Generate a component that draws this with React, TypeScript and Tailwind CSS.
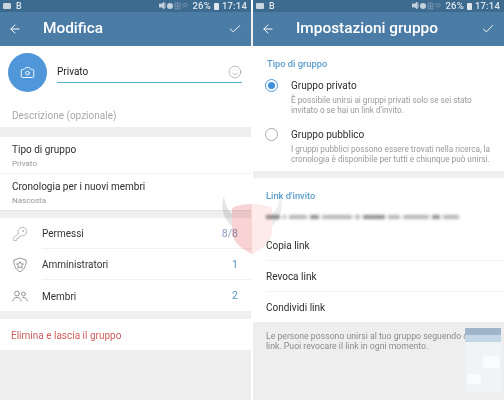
import { ArrowLeft, Camera, Check, KeyRound, Smile } from "lucide-react";

const StatusBar = () => (
    <div className="h-[12px] bg-[#3d6a8f] flex items-center justify-between pl-[3px] pr-[4px] text-[#dfe8ef]">
        <div className="flex items-center gap-[5px]">
            <div className="w-[8px] h-[6px] bg-[#c9d6e0] rounded-[1px]" />
            <span className="text-[9px] font-medium leading-none">B</span>
        </div>
        <div className="flex items-center gap-[2px]">
            <svg width="30" height="8" viewBox="0 0 30 8" className="text-[#c3d1dc]">
                <path d="M0 2h3l2-2v7L3 5H0z M6 1v5" fill="currentColor" stroke="currentColor" strokeWidth="0.8" />
                <circle cx="11" cy="4" r="3" fill="currentColor" />
                <path d="M16 1h5v6h-5z M16 4h5 M18.5 1v6" fill="none" stroke="currentColor" strokeWidth="0.6" opacity="0.6" />
                <path d="M23 3q3-3 6 0M24 5q2-2 4 0" fill="none" stroke="currentColor" strokeWidth="0.7" opacity="0.6" />
            </svg>
            <span className="text-[9.5px] font-medium leading-none tracking-[0.2px] ml-[1px]">26%</span>
            <div className="w-[5px] h-[7px] bg-[#dfe8ef] rounded-[1px] mx-[1px]" />
            <span className="text-[9.5px] font-medium leading-none tracking-[0.2px]">17:14</span>
        </div>
    </div>
);

const Header = ({ title, titleClass }: { title: string; titleClass: string }) => (
    <div className="h-[34px] bg-[#4a7ca6] flex items-center text-white shadow-[0_1px_2px_rgba(0,0,0,0.15)]">
        <ArrowLeft size={14} strokeWidth={1.7} className="ml-[8px] shrink-0" />
        <span className={`text-[15.4px] font-medium ${titleClass}`}>{title}</span>
        <Check size={14} strokeWidth={1.6} className="ml-auto mr-[9px]" />
    </div>
);

const ShieldStar = () => (
    <svg width="16" height="16" viewBox="0 0 16 16" fill="none" stroke="#8a8a8a" strokeWidth="0.9" strokeLinejoin="round">
        <path d="M8 1l6.2 2.200c0 5-1.600 9.200-6.200 11.600C3.400 12.400 1.800 8.200 1.800 3.200z" />
        <path d="M8 4.600l1.100 2.200 2.400.3-1.800 1.600.5 2.400L8 10l-2.200 1.100.5-2.400-1.800-1.600 2.400-.3z" />
    </svg>
);

const People = () => (
    <svg width="16" height="16" viewBox="0 0 16 16" fill="none" stroke="#8a8a8a" strokeWidth="0.9" strokeLinecap="round">
        <circle cx="5" cy="5.500" r="2.400" />
        <circle cx="11.500" cy="6" r="2" />
        <path d="M0.800 13c0-2.400 1.800-3.600 4.200-3.600S9.200 10.600 9.200 13" />
        <path d="M10.600 9.500c2.400-.3 4.600.9 4.600 3.500" />
    </svg>
);

const CountRow = ({ label, count, icon, countClass, divider }: { label: string; count: string; icon: React.ReactNode; countClass: string; divider?: boolean }) => (
    <div className="h-[31px] flex items-center">
        <div className="w-[42px] pl-[12px] flex items-center text-[#8a8a8a]">{icon}</div>
        <div className={`flex-1 h-full flex items-center justify-between pt-[1px] pr-[13px] ${divider ? "border-b border-[#f1f1f1]" : ""}`}>
            <span className="text-[10px] text-[#333333]">{label}</span>
            <span className={`text-[10.500px] ${countClass}`}>{count}</span>
        </div>
    </div>
);

const LeftPanel = () => (
    <div className="w-[251px] h-full flex flex-col bg-[#eeeeee]">
        <StatusBar />
        <Header title="Modifica" titleClass="ml-[21px]" />
        <div className="h-[81px] bg-white pl-[8px] pr-[9px]">
            <div className="flex items-start pt-[7px]">
                <div className="w-[39px] h-[39px] rounded-full bg-[#4f97d8] flex items-center justify-center text-white shrink-0">
                    <Camera size={15} strokeWidth={1.5} />
                </div>
                <div className="ml-[10px] flex-1 h-[22px] mt-[8px] flex items-center justify-between border-b border-[#58b1cf]">
                    <span className="text-[10px] text-[#222222]">Privato</span>
                    <Smile size={14} strokeWidth={1} className="text-[#8f8f8f]" />
                </div>
            </div>
            <p className="mt-[17px] ml-[4px] text-[10px] leading-[14px] text-[#a9a9a9]">Descrizione (opzionale)</p>
        </div>
        <div className="h-[10px] bg-[#efefef]" />
        <div className="h-[74px] bg-white border-b border-[#e4e4e4]">
            <div className="h-[37px] px-[12px] pt-[6px] border-b border-[#f3f3f3]">
                <p className="text-[10px] leading-[14px] text-[#2e2e2e]">Tipo di gruppo</p>
                <p className="text-[8px] leading-[13px] text-[#999999]">Privato</p>
            </div>
            <div className="h-[36px] px-[12px] pt-[6px]">
                <p className="text-[10px] leading-[14px] text-[#2e2e2e]">Cronologia per i nuovi membri</p>
                <p className="text-[8px] leading-[13px] text-[#999999]">Nascosta</p>
            </div>
        </div>
        <div className="h-[7px] bg-[#efefef]" />
        <div className="bg-white">
            <CountRow label="Permessi" count="8/8" countClass="text-[#8a9cc4]" icon={<KeyRound size={16} strokeWidth={0.9} />} divider />
            <CountRow label="Amministratori" count="1" countClass="text-[#4f93c4]" icon={<ShieldStar />} divider />
            <CountRow label="Membri" count="2" countClass="text-[#4f93c4]" icon={<People />} />
        </div>
        <div className="h-[8px] bg-[#efefef]" />
        <div className="h-[31px] bg-white flex items-center pt-[1px] px-[11px]">
            <span className="text-[10px] text-[#cf5f5f]">Elimina e lascia il gruppo</span>
        </div>
    </div>
);

const RadioOption = ({ title, lines, selected }: { title: string; lines: string[]; selected?: boolean }) => (
    <div className="flex">
        <div className="w-[38px] pl-[12px] pt-[2px] shrink-0">
            <div className={`w-[13px] h-[13px] rounded-full border flex items-center justify-center ${selected ? "border-[#4f97d8]" : "border-[#aaaaaa]"}`}>
                {selected && <div className="w-[7px] h-[7px] rounded-full bg-[#3f93dc]" />}
            </div>
        </div>
        <div>
            <p className="text-[10px] leading-[16px] pt-[1px] mb-[1px] text-[#2e2e2e]">{title}</p>
            {lines.map((line) => (
                <p key={line} className="text-[8.200px] leading-[10px] text-[#999999] whitespace-nowrap">{line}</p>
            ))}
        </div>
    </div>
);

const LinkRow = ({ label, divider }: { label: string; divider?: boolean }) => (
    <div className={`h-[31px] ml-[13px] flex items-center ${divider ? "border-b border-[#f3f3f3]" : ""}`}>
        <span className="text-[10px] text-[#2e2e2e]">{label}</span>
    </div>
);

const blurBars = [14, 3, 18, 9, 30, 5, 22, 12, 26, 8, 16];

const RightPanel = () => (
    <div className="w-[251px] h-full flex flex-col bg-[#eeeeee] relative">
        <StatusBar />
        <Header title="Impostazioni gruppo" titleClass="ml-[21px]" />
        <div className="h-[125px] bg-white">
            <p className="pl-[14px] pt-[11px] text-[9.300px] leading-[14px] font-medium text-[#5a9ccb]">Tipo di gruppo</p>
            <div className="mt-[6px]">
                <RadioOption selected title="Gruppo privato" lines={["È possibile unirsi ai gruppi privati solo se sei stato", "invitato o se hai un link d'invito."]} />
            </div>
            <div className="mt-[11px]">
                <RadioOption title="Gruppo pubblico" lines={["I gruppi pubblici possono essere trovati nella ricerca, la", "cronologia è disponibile per tutti e chiunque può unirsi."]} />
            </div>
        </div>
        <div className="h-[7px] bg-[#efefef]" />
        <div className="h-[144px] bg-white">
            <p className="pl-[13px] pt-[11px] text-[9.300px] leading-[14px] font-medium text-[#5a9ccb]">Link d'invito</p>
            <div className="mt-[12px] ml-[13px] mr-[12px] h-[4px] flex gap-[3px] blur-[1.5px] overflow-hidden">
                {blurBars.map((w, i) => (
                    <div key={i} style={{ width: w }} className={i % 3 === 0 ? "h-full bg-[#8f8f8f]" : "h-full bg-[#b5b5b5]"} />
                ))}
            </div>
            <div className="mt-[11px]">
                <LinkRow label="Copia link" divider />
                <LinkRow label="Revoca link" divider />
                <LinkRow label="Condividi link" />
            </div>
        </div>
        <div className="pl-[13px] pt-[9px] text-[8.700px] leading-[10px] text-[#8c8c8c]">
            <p>Le persone possono unirsi al tuo gruppo seguendo questo</p>
            <p>link. Puoi revocare il link in ogni momento.</p>
        </div>
        {/* pale blurred thumbnail over the bottom right corner */}
        <div className="absolute left-[212px] top-[328px] w-[36px] h-[64px] bg-[#f1f4f7] blur-[0.5px] flex flex-col">
            <div className="h-[7px] bg-[#9fb3cb]" />
            <div className="h-[7px] bg-[#c5d6e6]" />
            <div className="mt-[14px] ml-[18px] w-[16px] h-[12px] bg-[#f9fbfc]" />
            <div className="mt-[6px] ml-[2px] w-[14px] h-[10px] bg-[#f9fbfc]" />
        </div>
    </div>
);

const Watermark = () => (
    <svg width="64" height="64" viewBox="0 0 64 64" className="absolute left-[220px] top-[194px] mix-blend-multiply">
        <path d="M12 14c6-3 13-4 20-4v50C22 55 15 50 12 40z" fill="#f9d3d4" />
        <path d="M32 10c7 0 14 1 20 4v26c-3 10-10 15-20 20z" fill="#fdeaea" />
        <path d="M12 32C3 24 0 14 4 2c1 9 4 14 8 18z" fill="#e6e4e4" />
        <path d="M52 32c9-8 12-18 8-30-1 9-4 14-8 18z" fill="#f0eeee" />
    </svg>
);

export default function App() {
    return (
        <div className="relative w-[504px] h-[400px] overflow-hidden bg-white flex justify-between font-['Roboto',sans-serif] blur-[0.35px]">
            <LeftPanel />
            <RightPanel />
            <Watermark />
        </div>
    );
}
